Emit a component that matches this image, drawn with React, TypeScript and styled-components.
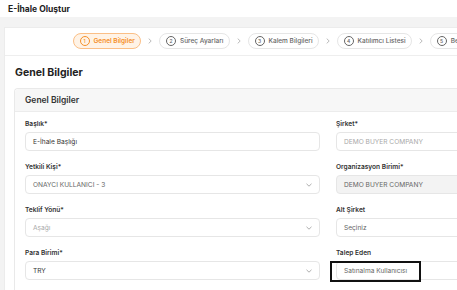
import React from 'react';
import styled, { createGlobalStyle } from 'styled-components';

const GlobalStyle = createGlobalStyle`
    html, body {
        margin: 0;
        padding: 0;
        background: #fff;
        overflow: hidden;
    }
    body {
        font-family: Inter, "Noto Sans", sans-serif;
        color: #333;
    }
`;

const Page = styled.div`
    width: 760px;
    height: 290px;
    overflow: hidden;
    display: flex;
    flex-direction: column;
`;

const TopBar = styled.div`
    height: 17px;
    flex-shrink: 0;
    padding-left: 8px;
    display: flex;
    align-items: center;
`;

const PageTitle = styled.h1`
    margin: 0;
    font-size: 8.5px;
    font-weight: 700;
    color: #222;
`;

const Body = styled.div`
    flex: 1 0 auto;
    background: #f3f3f3;
    padding: 10px 0 0 4px;
`;

const Card = styled.div`
    background: #fff;
    border: 1px solid #ececec;
    border-right: none;
    height: 100%;
`;

const Stepper = styled.div`
    display: flex;
    align-items: center;
    gap: 7px;
    padding: 5px 0 6px 68px;
    border-bottom: 1px solid #eeeeee;
`;

const Step = styled.div<{ $active?: boolean }>`
    height: 16px;
    box-sizing: border-box;
    display: flex;
    align-items: center;
    gap: 4px;
    padding: 0 5.5px;
    border-radius: 999px;
    border: 1px solid ${(p) => (p.$active ? '#fbbf86' : '#e6e6e6')};
    background: ${(p) => (p.$active ? '#fff3e6' : '#fff')};
    color: ${(p) => (p.$active ? '#f5902a' : '#666')};
    font-size: 6.5px;
    font-weight: ${(p) => (p.$active ? 600 : 500)};
    white-space: nowrap;
`;

const StepNum = styled.span`
    width: 8px;
    height: 8px;
    border-radius: 50%;
    border: 1px solid currentColor;
    display: flex;
    align-items: center;
    justify-content: center;
    font-size: 5px;
    font-weight: 500;
    line-height: 1;
`;

const Chevron = styled.span`
    width: 4px;
    display: flex;
    justify-content: center;
    color: #aaa;
`;

const SectionTitle = styled.h2`
    margin: 0;
    padding: 10px 0 0 10px;
    height: 22px;
    font-size: 10.5px;
    font-weight: 700;
    color: #222;
    line-height: 13px;
`;

const Panel = styled.div`
    margin-left: 9px;
    border: 1px solid #e9e9e9;
    border-right: none;
    border-radius: 4px 0 0 0;
`;

const PanelHeader = styled.div`
    height: 22px;
    background: #f7f7f7;
    border-bottom: 1px solid #ececec;
    display: flex;
    align-items: center;
    padding-left: 10px;
    font-size: 8.5px;
    font-weight: 600;
    color: #333;
    border-radius: 4px 0 0 0;
`;

const FormGrid = styled.div`
    display: grid;
    grid-template-columns: 295px 295px;
    column-gap: 16px;
    padding: 7px 0 0 10px;
`;

const Field = styled.div`
    display: flex;
    flex-direction: column;
    margin-bottom: 11px;
`;

const Label = styled.label`
    font-size: 6.6px;
    font-weight: 600;
    line-height: 10px;
    color: #333;
    margin-bottom: 3px;
`;

const InputBox = styled.div<{ $disabled?: boolean }>`
    position: relative;
    height: 19px;
    box-sizing: border-box;
    border: 1px solid #e6e6e6;
    border-radius: 4px;
    background: ${(p) => (p.$disabled ? '#f3f3f3' : '#fff')};
    display: flex;
    align-items: center;
    justify-content: space-between;
    padding: 0 7px 0 7px;
`;

const Value = styled.span<{ $tone?: 'dark' | 'muted' | 'light' }>`
    font-size: 6.6px;
    color: ${(p) =>
        p.$tone === 'light' ? '#a8a8a8' : p.$tone === 'muted' ? '#666' : '#333'};
    white-space: nowrap;
`;

const Caret = styled.svg`
    width: 6px;
    height: 4px;
    color: #999;
`;

const FocusRing = styled.span`
    position: absolute;
    left: -7px;
    top: -1px;
    width: 91px;
    height: 21px;
    box-sizing: border-box;
    border: 2px solid #111;
`;

const DownIcon = () => (
    <Caret viewBox="0 0 6 4" fill="none">
        <path d="M0.5 0.8L3 3.2L5.5 0.8" stroke="currentColor" strokeWidth="0.8" />
    </Caret>
);

const steps = [
    'Genel Bilgiler',
    'Süreç Ayarları',
    'Kalem Bilgileri',
    'Katılımcı Listesi',
    'Belgeler',
];

type FieldDef = {
    label: string;
    value: string;
    tone?: 'dark' | 'muted' | 'light';
    select?: boolean;
    disabled?: boolean;
    focused?: boolean;
};

const fields: FieldDef[] = [
    { label: 'Başlık*', value: 'E-İhale Başlığı' },
    { label: 'Şirket*', value: 'DEMO BUYER COMPANY', tone: 'light' },
    { label: 'Yetkili Kişi*', value: 'ONAYCI KULLANICI - 3', tone: 'muted', select: true },
    { label: 'Organizasyon Birimi*', value: 'DEMO BUYER COMPANY', tone: 'muted', disabled: true },
    { label: 'Teklif Yönü*', value: 'Aşağı', tone: 'light', select: true },
    { label: 'Alt Şirket', value: 'Seçiniz', tone: 'muted' },
    { label: 'Para Birimi*', value: 'TRY', select: true },
    { label: 'Talep Eden', value: 'Satınalma Kullanıcısı', tone: 'muted', focused: true },
];

const App = () => {
    return (
        <>
            <GlobalStyle />
            <Page>
                <TopBar>
                    <PageTitle>E-İhale Oluştur</PageTitle>
                </TopBar>
                <Body>
                    <Card>
                        <Stepper>
                            {steps.map((s, i) => (
                                <React.Fragment key={s}>
                                    {i > 0 && (
                                        <Chevron>
                                            <svg width="4" height="6" viewBox="0 0 4 6" fill="none">
                                                <path d="M0.7 0.6L3.2 3L0.7 5.4" stroke="currentColor" strokeWidth="0.8" />
                                            </svg>
                                        </Chevron>
                                    )}
                                    <Step $active={i === 0}>
                                        <StepNum>{i + 1}</StepNum>
                                        {s}
                                    </Step>
                                </React.Fragment>
                            ))}
                        </Stepper>
                        <SectionTitle>Genel Bilgiler</SectionTitle>
                        <Panel>
                            <PanelHeader>Genel Bilgiler</PanelHeader>
                            <FormGrid>
                                {fields.map((f) => (
                                    <Field key={f.label}>
                                        <Label>{f.label}</Label>
                                        <InputBox $disabled={f.disabled}>
                                            <Value $tone={f.tone}>{f.value}</Value>
                                            {f.select && <DownIcon />}
                                            {f.focused && <FocusRing />}
                                        </InputBox>
                                    </Field>
                                ))}
                            </FormGrid>
                        </Panel>
                    </Card>
                </Body>
            </Page>
        </>
    );
};

export default App;
